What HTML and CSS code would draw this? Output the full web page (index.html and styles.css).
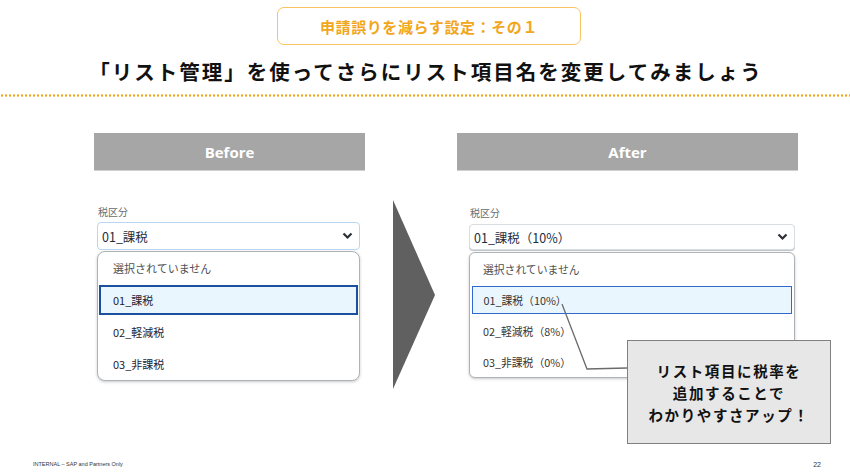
FILE: index.html
```html
<!DOCTYPE html>
<html lang="ja">
<head>
<meta charset="utf-8">
<link rel="stylesheet" href="styles.css">
</head>
<body>
<div class="page">
  <div class="badge">申請誤りを減らす設定：その１</div>
  <h1 class="title">「リスト管理」を使ってさらにリスト項目名を変更してみましょう</h1>
  <div class="dots"></div>

  <div class="compare">
    <div class="col col-before">
      <div class="col-head">Before</div>
      <div class="field">
        <div class="label">税区分</div>
        <div class="select">
          <span>01_課税</span>
          <svg class="chev" width="11" height="8" viewBox="0 0 11 8"><polyline points="1.5,1.5 5.5,5.5 9.5,1.5" fill="none" stroke="#2b2f33" stroke-width="2.2"/></svg>
        </div>
        <div class="list">
          <div class="item muted">選択されていません</div>
          <div class="item sel">01_課税</div>
          <div class="item">02_軽減税</div>
          <div class="item">03_非課税</div>
        </div>
      </div>
    </div>

    <svg class="arrow" width="42" height="189" viewBox="0 0 42 189"><polygon points="0,0 42,95 0,189" fill="#606060"/></svg>

    <div class="col col-after">
      <div class="col-head">After</div>
      <div class="field">
        <div class="label">税区分</div>
        <div class="select">
          <span>01_課税（10%）</span>
          <svg class="chev" width="11" height="8" viewBox="0 0 11 8"><polyline points="1.5,1.5 5.5,5.5 9.5,1.5" fill="none" stroke="#2b2f33" stroke-width="2.2"/></svg>
        </div>
        <div class="list">
          <div class="item muted">選択されていません</div>
          <div class="item sel">01_課税（10%）</div>
          <div class="item">02_軽減税（8%）</div>
          <div class="item">03_非課税（0%）</div>
        </div>
      </div>
    </div>
  </div>

  <svg class="connector" width="850" height="473" viewBox="0 0 850 473"><polyline points="562,304 587,369 627,368" fill="none" stroke="#6b6b6b" stroke-width="1.3"/></svg>

  <div class="callout">リスト項目に税率を<br>追加することで<br>わかりやすさアップ！</div>

  <div class="footer">
    <span class="internal">INTERNAL – SAP and Partners Only</span>
    <span class="pageno">22</span>
  </div>
</div>
</body>
</html>
```
FILE: styles.css
```css
* { box-sizing: border-box; }
html, body { margin: 0; padding: 0; background: #ffffff; }
body {
  font-family: "Noto Sans CJK JP", "Noto Sans", sans-serif;
  color: #1d1d1d;
}
.page {
  position: relative;
  width: 850px;
  height: 473px;
  overflow: hidden;
  display: flex;
  flex-direction: column;
}
.badge {
  margin: 7px 0 0 277px;
  width: 304px;
  height: 38px;
  border: 1.5px solid #f7c461;
  border-radius: 7px;
  color: #f1a61c;
  font-weight: 700;
  font-size: 15px;
  letter-spacing: 0.6px;
  display: flex;
  align-items: center;
  justify-content: center;
}
.title {
  margin: 11px 0 0 0;
  height: 30px;
  font-size: 20.5px;
  font-weight: 700;
  letter-spacing: 2px;
  text-align: center;
  line-height: 30px;
  color: #111;
  padding-left: 2px;
}
.dots {
  margin-top: 8px;
  height: 3px;
  background-image: radial-gradient(circle, #f2a51e 1px, transparent 1.3px);
  background-size: 4px 3px;
  background-repeat: repeat-x;
}
.compare {
  display: flex;
  align-items: flex-start;
  margin-top: 36px;
  padding-left: 94px;
}
.col-head {
  height: 38px;
  background: #a6a6a6;
  color: #ffffff;
  font-family: "Open Sans", "Liberation Sans", sans-serif;
  font-weight: 700;
  font-size: 15px;
  display: flex;
  align-items: center;
  justify-content: center;
  border-bottom: 1px solid #d0d0d0;
}
.col-before { width: 271px; }
.col-after { width: 341px; margin-left: 22px; }
.arrow { margin: 67px 0 0 28px; display: block; }

.field { display: flex; flex-direction: column; }
.label {
  font-size: 10px;
  color: #6a6d70;
  line-height: 14px;
}
.col-before .field { padding: 34px 5px 0 3px; }
.col-after .field { padding: 35px 3px 0 12px; }
.col-before .label { padding-left: 1px; }
.col-after .label { padding-left: 1px; }

.select {
  margin-top: 3px;
  display: flex;
  align-items: center;
  justify-content: space-between;
  border: 1px solid #b9d7f3;
  border-radius: 4px;
  background: #fff;
  font-size: 12.5px;
  color: #1d2d3e;
}
.col-before .select { height: 28px; padding: 0 6px 0 4px; }
.col-after .select { height: 26px; padding: 0 6px 0 4px; border-color: #d8dde2; box-shadow: 0 1px 0 #c2c7cc; margin-top: 4px; }

.list {
  margin-top: 1px;
  border: 1px solid #aeb3b8;
  border-radius: 8px;
  box-shadow: 0 1px 3px rgba(0,0,0,0.22);
  background: #fff;
  padding: 0 1px;
}
.col-after .list { margin-top: 2px; border-radius: 6px; }
.item {
  display: flex;
  align-items: center;
  font-size: 11px;
  color: #223;
}
.col-before .item { height: 32px; padding-left: 14px; }
.col-after .item { height: 31px; padding-left: 12px; font-size: 10.8px; color: #333; }
.item.muted { color: #4d4f52; }
.item.sel {
  background: #eaf6fe;
  border: 2px solid #1b4fa0;
}
.col-before .item.sel { padding-left: 12px; height: 30px; margin: 1px 0; }
.col-after .item.sel { border: 1.5px solid #3169d0; padding-left: 10.5px; height: 28px; margin: 1.5px 1px; }

.connector { position: absolute; left: 0; top: 0; pointer-events: none; }

.callout {
  position: absolute;
  left: 627px;
  top: 340px;
  width: 204px;
  height: 104px;
  background: #e7e7e7;
  border: 1.5px solid #808080;
  font-size: 14.5px;
  font-weight: 700;
  letter-spacing: 1.6px;
  line-height: 22px;
  text-align: center;
  display: flex;
  align-items: center;
  justify-content: center;
  color: #111;
  padding-top: 2px;
}

.footer {
  position: absolute;
  left: 0;
  right: 0;
  top: 459px;
  height: 10px;
  display: flex;
  justify-content: space-between;
  align-items: center;
  font-family: "Liberation Sans", sans-serif;
  color: #333;
}
.internal { margin-left: 33px; font-size: 5.5px; }
.pageno { margin-right: 29px; font-size: 7px; }
```
